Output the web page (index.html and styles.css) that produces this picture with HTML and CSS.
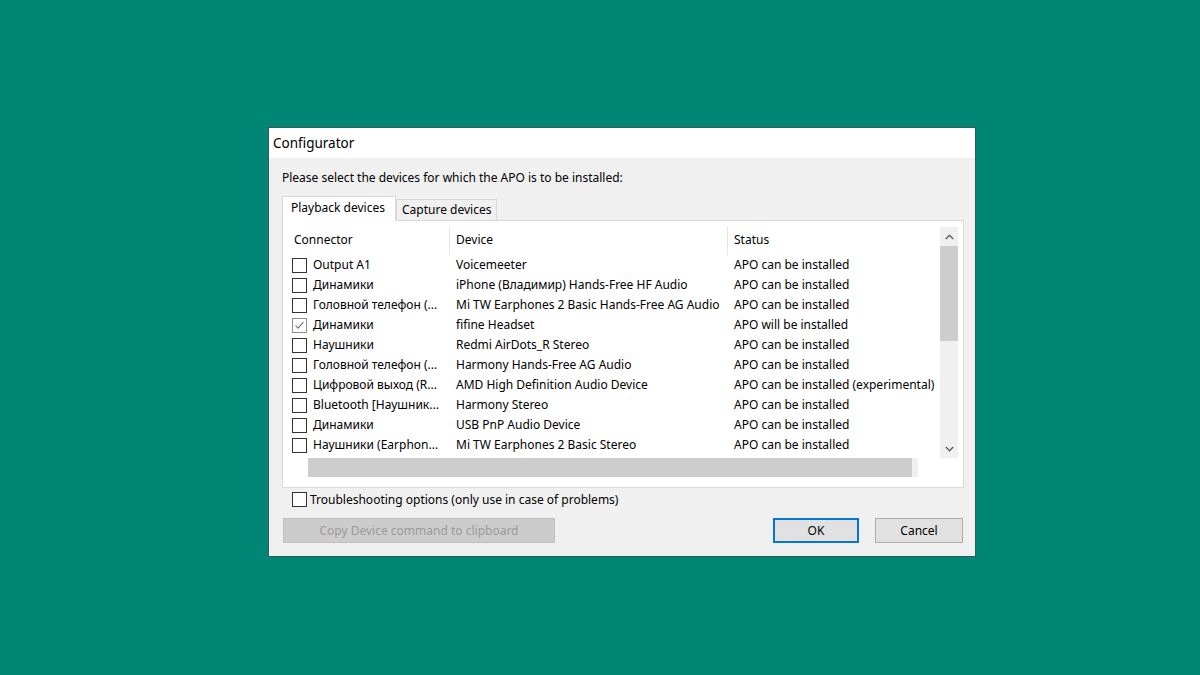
FILE: index.html
```html
<!DOCTYPE html>
<html>
<head>
<meta charset="utf-8">
<link rel="stylesheet" href="styles.css">
</head>
<body>
<div class="window">
  <div class="titlebar">Configurator</div>
  <div class="content">
    <div class="prompt">Please select the devices for which the APO is to be installed:</div>
    <div class="tabs">
      <div class="tab active">Playback devices</div>
      <div class="tab">Capture devices</div>
    </div>
    <div class="panel">
      <div class="list">
        <div class="list-main">
          <div class="header">
            <div class="hcell c1">Connector</div>
            <div class="hcell c2">Device</div>
            <div class="hcell c3">Status</div>
          </div>
          <div class="rows">
            <div class="row"><div class="cell c1"><span class="cb"></span>Output A1</div><div class="cell c2">Voicemeeter</div><div class="cell c3">APO can be installed</div></div>
            <div class="row"><div class="cell c1"><span class="cb"></span>Динамики</div><div class="cell c2">iPhone (Владимир) Hands-Free HF Audio</div><div class="cell c3">APO can be installed</div></div>
            <div class="row"><div class="cell c1"><span class="cb"></span>Головной телефон (...</div><div class="cell c2">Mi TW Earphones 2 Basic Hands-Free AG Audio</div><div class="cell c3">APO can be installed</div></div>
            <div class="row"><div class="cell c1"><span class="cb checked"><svg viewBox="0 0 13 13" width="13" height="13"><path d="M2.5 6.5 L5 9.2 L10.5 3" fill="none" stroke="#6e6e6e" stroke-width="1.1"/></svg></span>Динамики</div><div class="cell c2">fifine Headset</div><div class="cell c3">APO will be installed</div></div>
            <div class="row"><div class="cell c1"><span class="cb"></span>Наушники</div><div class="cell c2">Redmi AirDots_R Stereo</div><div class="cell c3">APO can be installed</div></div>
            <div class="row"><div class="cell c1"><span class="cb"></span>Головной телефон (...</div><div class="cell c2">Harmony Hands-Free AG Audio</div><div class="cell c3">APO can be installed</div></div>
            <div class="row"><div class="cell c1"><span class="cb"></span>Цифровой выход (R...</div><div class="cell c2">AMD High Definition Audio Device</div><div class="cell c3">APO can be installed (experimental)</div></div>
            <div class="row"><div class="cell c1"><span class="cb"></span>Bluetooth [Наушник...</div><div class="cell c2">Harmony Stereo</div><div class="cell c3">APO can be installed</div></div>
            <div class="row"><div class="cell c1"><span class="cb"></span>Динамики</div><div class="cell c2">USB PnP Audio Device</div><div class="cell c3">APO can be installed</div></div>
            <div class="row"><div class="cell c1"><span class="cb"></span>Наушники (Earphon...</div><div class="cell c2">Mi TW Earphones 2 Basic Stereo</div><div class="cell c3">APO can be installed</div></div>
            <div class="row"><div class="cell c1"><span class="cb"></span></div><div class="cell c2"></div><div class="cell c3"></div></div>
          </div>
        </div>
        <div class="vscroll">
          <div class="arrow"><svg viewBox="0 0 9 6" width="9" height="6"><path d="M0.8 5 L4.5 1.3 L8.2 5" fill="none" stroke="#606060" stroke-width="1.5"/></svg></div>
          <div class="vthumb"></div>
          <div class="vtrack"></div>
          <div class="arrow"><svg viewBox="0 0 9 6" width="9" height="6"><path d="M0.8 1 L4.5 4.7 L8.2 1" fill="none" stroke="#606060" stroke-width="1.5"/></svg></div>
        </div>
        <div class="hscroll">
          <div class="hleft"></div>
          <div class="hthumb"></div>
          <div class="htrack"></div>
        </div>
        <div class="corner"></div>
      </div>
    </div>
    <label class="trouble"><span class="cb"></span>Troubleshooting options (only use in case of problems)</label>
    <div class="buttons">
      <div class="btn disabled">Copy Device command to clipboard</div>
      <div class="spacer"></div>
      <div class="btn ok">OK</div>
      <div class="btn cancel">Cancel</div>
    </div>
  </div>
</div>
</body>
</html>
```

FILE: styles.css
```css
* { box-sizing: border-box; }
html, body { margin: 0; padding: 0; }
body {
  width: 1200px;
  height: 675px;
  background: #018574;
  font-family: "Noto Sans", "Open Sans", sans-serif;
  font-size: 12px;
  color: #000;
  overflow: hidden;
  padding: 127px 0 0 268px;
}
.window {
  width: 708px;
  height: 430px;
  border: 1px solid #2c5e57;
  background: #f0f0f0;
  display: flex;
  flex-direction: column;
}
.titlebar {
  height: 30px;
  background: #fff;
  display: flex;
  align-items: center;
  padding-left: 4px;
  font-size: 13.5px;
  color: #000;
}
.content {
  flex: 1;
  padding: 0 11px 0 13px;
  display: flex;
  flex-direction: column;
}
.prompt {
  height: 20px;
  margin-top: 10px;
  line-height: 20px;
  padding-left: 0;
}
.tabs {
  display: flex;
  align-items: flex-end;
  margin-top: 7px;
  height: 25px;
  position: relative;
  z-index: 1;
}
.tab {
  height: 21px;
  border: 1px solid #d9d9d9;
  border-bottom: none;
  background: #f0f0f0;
  padding: 0 5px 0 5px;
  line-height: 20px;
}
.tab.active {
  height: 25px;
  background: #fff;
  padding: 0 7px 0 8px;
  line-height: 22px;
  margin-bottom: -1px;
  border-right: 1px solid #d9d9d9;
  width: 114px;
}
.panel {
  height: 268px;
  border: 1px solid #d9d9d9;
  background: #fff;
  padding: 6px 5px 0 5px;
}
.list {
  display: grid;
  grid-template-columns: 652px 18px;
  grid-template-rows: 231px 19px;
}
.list-main {
  overflow: hidden;
}
.header {
  display: flex;
  height: 28px;
}
.hcell {
  height: 28px;
  line-height: 26px;
  padding-left: 6px;
  border-right: 1px solid #e5e5e5;
}
.c1 { width: 162px; flex: none; }
.c2 { width: 278px; flex: none; }
.c3 { width: 212px; flex: none; }
.hcell.c3 { border-right: none; padding-left: 6px; }
.rows { height: 203px; overflow: hidden; }
.row {
  display: flex;
  height: 20px;
  line-height: 20px;
  white-space: nowrap;
}
.cell { padding-left: 6px; overflow: hidden; }
.cell.c1 { padding-left: 4px; display: flex; align-items: center; }
.cb {
  width: 15px;
  height: 15px;
  border: 1px solid #333;
  background: #fff;
  flex: none;
  margin-right: 6px;
  display: inline-flex;
  align-items: center;
  justify-content: center;
}
.cb.checked { border-color: #8c8c8c; }
.cb svg { display: block; }
.vscroll {
  background: #f0f0f0;
  display: flex;
  flex-direction: column;
}
.arrow {
  height: 19px;
  display: flex;
  align-items: center;
  justify-content: center;
}
.vthumb { height: 95px; background: #cdcdcd; }
.vtrack { flex: 1; }
.hscroll {
  display: flex;
  width: 630px;
}
.hleft { width: 20px; background: #fff; }
.hthumb { width: 604px; background: #cdcdcd; }
.htrack { flex: 1; background: #f0f0f0; }
.corner { background: #fff; }
.trouble {
  display: flex;
  align-items: center;
  height: 22px;
  margin-top: 0;
  padding-left: 10px;
}
.trouble .cb { margin-right: 3px; }
.buttons {
  display: flex;
  margin-top: 8px;
  padding-left: 1px;
}
.spacer { flex: 1; }
.btn {
  height: 25px;
  border: 1px solid #adadad;
  background: #e1e1e1;
  display: flex;
  align-items: center;
  justify-content: center;
}
.btn.disabled {
  width: 272px;
  background: #cccccc;
  border-color: #bfbfbf;
  color: #9a9a9a;
}
.btn.ok {
  width: 86px;
  border: 2px solid #0078d7;
  margin-right: 16px;
}
.btn.cancel { width: 88px; margin-right: 1px; }
```
